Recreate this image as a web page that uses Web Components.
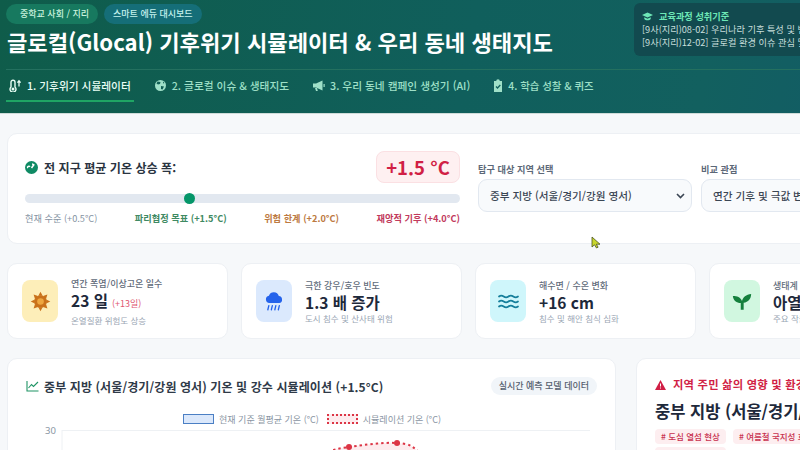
<!DOCTYPE html>
<html lang="ko">
<head>
<meta charset="utf-8">
<title>글로컬 기후위기 시뮬레이터</title>
<style>
  html, body { margin: 0; height: 450px; overflow: hidden; background: #f6f8fa; }
  body { font-family: "Noto Sans CJK KR", "Noto Sans", sans-serif; width: 937px; }
</style>
</head>
<body>
<app-header></app-header>
<climate-controls></climate-controls>
<section class="stats" style="display:grid;grid-template-columns:repeat(4,221px);gap:13px;padding:19px 7px 19px">
  <stat-card label="연간 폭염/이상고온 일수" value="23 일" delta="(+13일)" note="온열질환 위험도 상승" tone="sun"></stat-card>
  <stat-card label="극한 강우/호우 빈도" value="1.3 배 증가" note="도시 침수 및 산사태 위험" tone="rain"></stat-card>
  <stat-card label="해수면 / 수온 변화" value="+16 cm" note="침수 및 해안 침식 심화" tone="wave"></stat-card>
  <stat-card label="생태계 변화" value="아열대화" note="주요 작물 재배지 북상" tone="leaf"></stat-card>
</section>
<section style="display:grid;grid-template-columns:609px 294px;gap:20px;padding:0 7px">
  <chart-panel></chart-panel>
  <impact-panel></impact-panel>
</section>
<mouse-cursor></mouse-cursor>

<script>
const SUN_RAYS = [0, 45, 90, 135, 180, 225, 270, 315]
  .map(a => `<path d="M9.600 5.500L12 .8l2.400 4.700z" transform="rotate(${a} 12 12)"/>`).join('');
const ICONS = {
  sun: `<svg width="21" height="21" viewBox="0 0 24 24" fill="#c9711a">${SUN_RAYS}<circle cx="12" cy="12" r="7.200"/><circle cx="12" cy="12" r="3.800" fill="#eea63f"/></svg>`,
  rain: '<svg width="20" height="20" viewBox="0 0 24 24" fill="#2563eb"><path d="M6.500 14.500a4.500 4.500 0 0 1-.6-8.900A6.300 6.300 0 0 1 17.800 6a4.300 4.300 0 0 1 .4 8.500z"/><path d="M5.800 17.500l-1.200 5M10 17.500l-1.200 5M14.200 17.500l-1.200 5M18.400 17.500l-1.200 5" stroke="#2563eb" stroke-width="1.600" stroke-linecap="round"/></svg>',
  wave: '<svg width="21" height="15" viewBox="0 0 21 15" fill="none" stroke="#167f9b" stroke-width="1.700" stroke-linecap="round"><path d="M1 2.500c1.500-1.300 3-1.300 4.700 0s3 1.300 4.800 0 3-1.300 4.800 0 3 1.300 4.700 0"/><path d="M1 7.500c1.500-1.300 3-1.300 4.700 0s3 1.300 4.800 0 3-1.300 4.800 0 3 1.300 4.700 0"/><path d="M1 12.500c1.500-1.300 3-1.300 4.700 0s3 1.300 4.800 0 3-1.300 4.800 0 3 1.300 4.700 0"/></svg>',
  leaf: '<svg width="20" height="20" viewBox="0 0 24 24" fill="#15803d"><path d="M10.500 22.500v-8C5.500 14.500 1.500 11.500 1 6c5 0 9.500 1.500 11 6 1-4.500 5-8 11-8.500-.2 6-3.500 9.800-9 10.500v8.500z"/></svg>'
};
const TONES = { sun: '#fdeeb9', rain: '#dbe9fd', wave: '#cff6fb', leaf: '#d1f7e0' };

class AppHeader extends HTMLElement {
  constructor() {
    super();
    this.attachShadow({ mode: 'open' });
    this.shadowRoot.innerHTML = `
      <style>
        :host { display: block; height: 114px; box-sizing: border-box; padding: 4px 0 0 6px; color: #fff;
          background: linear-gradient(100deg, #0f5c4a 0%, #105f5c 50%, #12605f 75%, #125a68 100%);
          border-bottom: 1px solid #cfdcd9; overflow: hidden; }
        .top { display: flex; justify-content: space-between; height: 65px; }
        .badges { display: flex; gap: 6px; }
        .badge { height: 20px; line-height: 19px; border-radius: 10px; font-size: 9px; font-weight: 500; padding: 0 9px 0 14px; background: #17795f; color: #c9f3de; }
        .badge.blue { background: #156e78; color: #c5f2ee; padding: 0 9px 0 9px; }
        h1 { margin: 1px 0 0 1px; font-size: 22.150px; line-height: 33px; font-weight: 700; white-space: nowrap; }
        .std { width: 303px; height: 53px; margin: -1px 0 0; box-sizing: border-box; padding: 7px 8px; border-radius: 6px; background: #124a4f; font-size: 9.200px; line-height: 13px; color: #c9dfdc; white-space: nowrap; flex: none; }
        .std b { display: flex; align-items: center; gap: 6px; color: #6ee7b7; font-weight: 600; }
        nav { display: flex; gap: 17px; height: 33px; border-top: 1px solid #24705f; }
      </style>
      <div class="top">
        <div>
          <div class="badges"><span class="badge">중학교 사회 / 지리</span><span class="badge blue">스마트 에듀 대시보드</span></div>
          <h1>글로컬(Glocal) 기후위기 시뮬레이터 &amp; 우리 동네 생태지도</h1>
        </div>
        <div class="std">
          <b><svg width="11" height="9" viewBox="0 0 24 18" fill="#6ee7b7"><path d="M12 0L0 5.500l12 5.500 12-5.500zM5 10.500v4c2 3.500 12 3.500 14 0v-4l-7 3.200z"/></svg>교육과정 성취기준</b>
          [9사(지리)08-02] 우리나라 기후 특성 및 변화<br>[9사(지리)12-02] 글로컬 환경 이슈 관심 및 참여
        </div>
      </div>
      <nav>
        <nav-tab active icon="temp">1. 기후위기 시뮬레이터</nav-tab>
        <nav-tab icon="globe">2. 글로컬 이슈 &amp; 생태지도</nav-tab>
        <nav-tab icon="horn">3. 우리 동네 캠페인 생성기 (AI)</nav-tab>
        <nav-tab icon="check" style="font-size:10.400px">4. 학습 성찰 &amp; 퀴즈</nav-tab>
      </nav>`;
  }
}

const TAB_ICONS = {
  temp: '<svg width="13" height="13" viewBox="0 0 13 13"><path d="M4 1.200a2 2 0 0 1 2 2v4.700a3 3 0 1 1-4 0V3.200a2 2 0 0 1 2-2z" fill="none" stroke="currentColor" stroke-width="1.400"/><circle cx="4" cy="10" r="1.500" fill="currentColor"/><path d="M10 7.500V2M8.400 3.600L10 1.800l1.600 1.800" fill="none" stroke="currentColor" stroke-width="1.300"/></svg>',
  globe: '<svg width="13" height="13" viewBox="0 0 13 13"><circle cx="6.500" cy="6.500" r="5.500" fill="currentColor"/><path d="M3.500 2.500l3 .5-.5 2-2 .5-1.500-1zM7 7l3 .5-1.500 3-1.500-.5zM9 2.500l1.500 1.500-1.500.5z" fill="#105f55"/></svg>',
  horn: '<svg width="13" height="13" viewBox="0 0 13 13"><path d="M1 4.500h3L10.500 1.500v10L4 8.500H1zM3 9h2l.8 3H4zM11.500 5h1.200v3h-1.200z" fill="currentColor"/></svg>',
  check: '<svg width="10" height="13" viewBox="1.500 0 10 13"><path d="M2.500 2h2.200a1.800 1.800 0 0 1 3.600 0h2.200v11h-8z" fill="currentColor"/><path d="M4.500 7.500l1.500 1.500 2.800-3" fill="none" stroke="#105f5c" stroke-width="1.300"/></svg>'
};

class NavTab extends HTMLElement {
  connectedCallback() {
    const icon = TAB_ICONS[this.getAttribute('icon')];
    this.attachShadow({ mode: 'open' }).innerHTML = `
      <style>
        :host { display: flex; align-items: center; gap: 5px; height: 32px; box-sizing: border-box; padding: 0 3px; color: #9fe0c8; font-size: 10.700px; font-weight: 500; white-space: nowrap; border-bottom: 2px solid transparent; }
        :host([active]) { color: #eafff6; border-bottom-color: #1fa564; }
      </style>
      ${icon}<slot></slot>`;
  }
}

class ClimateControls extends HTMLElement {
  constructor() {
    super();
    this.attachShadow({ mode: 'open' });
    this.shadowRoot.innerHTML = `
      <style>
        :host { display: grid; grid-template-columns: 444px 214px 214px; column-gap: 9px; height: 111px; box-sizing: border-box; margin: 19px 7px 0; padding: 17px 17px 0; background: #fff; border: 1px solid #edf0f4; border-radius: 10px; }
        .left { width: 435px; }
        .head { display: flex; justify-content: space-between; align-items: center; height: 32px; }
        .head b { display: flex; align-items: center; gap: 6px; font-size: 12.100px; font-weight: 600; color: #2a3441; }
        .value { width: 84px; height: 32px; line-height: 30px; box-sizing: border-box; text-align: center; font-size: 18.500px; font-weight: 700; color: #d11f45; background: #fef0f1; border: 1px solid #fbe0e3; border-radius: 8px; }
        .track { position: relative; height: 9px; margin-top: 11px; border-radius: 5px; background: #e2e8f0; }
        .thumb { position: absolute; left: 159px; top: -1px; width: 11px; height: 11px; border-radius: 50%; background: #059669; }
        .ticks { display: flex; justify-content: space-between; margin-top: 9px; font-size: 9.200px; line-height: 13px; white-space: nowrap; }
        .field { padding-top: 11px; font-size: 9.200px; font-weight: 600; color: #5c6878; white-space: nowrap; }
      </style>
      <div class="left">
        <div class="head">
          <b><svg width="13" height="13" viewBox="0 0 12 12"><circle cx="6" cy="6" r="6" fill="#0f8a64"/><path d="M6 6.500L8.500 3M2.500 6.500a1 1 0 0 1 2-1M6.500 2.800a1 1 0 0 1 1 1" stroke="#fff" stroke-width="1.400" fill="none"/></svg>전 지구 평균 기온 상승 폭:</b>
          <span class="value">+1.5 °C</span>
        </div>
        <div class="track"><div class="thumb"></div></div>
        <div class="ticks">
          <span style="color:#8593a3;font-weight:400">현재 수준 (+0.5°C)</span>
          <span style="color:#3f8a63;font-weight:600">파리협정 목표 (+1.5°C)</span>
          <span style="color:#bd7a42;font-weight:600">위험 한계 (+2.0°C)</span>
          <span style="color:#c23a5c;font-weight:600">재앙적 기후 (+4.0°C)</span>
        </div>
      </div>
      <div class="field">탐구 대상 지역 선택<select-box>중부 지방 (서울/경기/강원 영서)</select-box></div>
      <div class="field">비교 관점<select-box>연간 기후 및 극값 변화</select-box></div>`;
  }
}

class SelectBox extends HTMLElement {
  connectedCallback() {
    this.attachShadow({ mode: 'open' }).innerHTML = `
      <style>
        :host { display: flex; align-items: center; justify-content: space-between; height: 33px; margin-top: 3px; box-sizing: border-box; padding: 0 6px 0 11px; background: #f8fafc; border: 1px solid #e2e8f0; border-radius: 9px; font-size: 10.600px; font-weight: 500; color: #3b4654; white-space: nowrap; }
      </style>
      <slot></slot>
      <svg width="9" height="6" viewBox="0 0 9 6" fill="none" stroke="#3b4654" stroke-width="1.600"><path d="M1 1l3.500 3.500L8 1"/></svg>`;
  }
}

class StatCard extends HTMLElement {
  connectedCallback() {
    const tone = this.getAttribute('tone');
    const delta = this.getAttribute('delta');
    this.attachShadow({ mode: 'open' }).innerHTML = `
      <style>
        :host { display: flex; align-items: center; gap: 13px; height: 76px; box-sizing: border-box; padding: 0 14px; background: #fff; border: 1px solid #edf0f4; border-radius: 10px; white-space: nowrap; overflow: hidden; }
        .ico { flex: none; width: 36px; height: 42px; display: flex; align-items: center; justify-content: center; border-radius: 8px; background: ${TONES[tone]}; }
        .label { font-size: 9px; line-height: 13px; font-weight: 500; color: #5f6b7a; }
        .value { font-size: 15.500px; line-height: 20px; font-weight: 700; color: #1e293b; }
        .value small { font-size: 9px; font-weight: 400; color: #e0566f; margin-left: 4px; }
        .note { font-size: 8.500px; line-height: 12px; color: #9aa6b4; }
      </style>
      <div class="ico">${ICONS[tone]}</div>
      <div>
        <div class="label">${this.getAttribute('label')}</div>
        <div class="value">${this.getAttribute('value')}${delta ? `<small>${delta}</small>` : ''}</div>
        <div class="note">${this.getAttribute('note')}</div>
      </div>`;
  }
}

class ChartPanel extends HTMLElement {
  constructor() {
    super();
    this.attachShadow({ mode: 'open' });
    this.shadowRoot.innerHTML = `
      <style>
        :host { display: block; height: 160px; box-sizing: border-box; padding: 17px 18px 0; background: #fff; border: 1px solid #edf0f4; border-radius: 10px 10px 0 0; }
        .head { display: flex; justify-content: space-between; align-items: center; height: 20px; }
        .head b { display: flex; align-items: center; gap: 5px; font-size: 12px; font-weight: 600; color: #2f3a48; letter-spacing: .1px; white-space: nowrap; }
        .tag { height: 18px; line-height: 17px; padding: 0 8px; border-radius: 9px; background: #f1f5f9; font-size: 9px; font-weight: 500; color: #55606e; }
        .legend { display: flex; justify-content: center; align-items: center; gap: 7px; margin-top: 16px; height: 14px; font-size: 9px; color: #8a95a3; padding-left: 1px; white-space: nowrap; }
        .swatch { width: 31px; height: 10px; box-sizing: border-box; margin-right: -2px; }
        svg.plot { display: block; margin: 0 0 0 -4px; }
      </style>
      <div class="head">
        <b><svg width="13" height="12" viewBox="0 0 13 12" fill="none" stroke="#1f9465" stroke-width="1.100"><path d="M1 1v10h11.500M2.500 8l3-3.500 2 2L12 2"/></svg>중부 지방 (서울/경기/강원 영서) 기온 및 강수 시뮬레이션 (+1.5°C)</b>
        <span class="tag">실시간 예측 모델 데이터</span>
      </div>
      <div class="legend">
        <span class="swatch" style="background:#dbe8fb;border:1.500px solid #4b7fc4"></span><span>현재 기준 월평균 기온 (°C)</span>
        <span class="swatch" style="background:#fdecee;border:2px dotted #dc3545;margin-left:1px"></span><span>시뮬레이션 기온 (°C)</span>
      </div>
      <svg class="plot" width="580" height="30" viewBox="0 0 580 30">
        <line x1="40" y1="4.500" x2="568" y2="4.500" stroke="#eef1f4"/>
        <line x1="40" y1="4" x2="40" y2="30" stroke="#eef1f4"/>
        <text x="23" y="8" font-size="9.500" fill="#8a95a3" font-family="Noto Sans, sans-serif">30</text>
        <path d="M306 30V26C313 23 320 22 327 21S360 16 375 17S390 21 396 25V30z" fill="#fdecee"/>
        <path d="M306 26C313 23 320 22 327 21S360 16 375 17S390 21 396 25" fill="none" stroke="#dc3545" stroke-width="2" stroke-dasharray="2.400 3"/>
        <circle cx="327" cy="21" r="3" fill="#dc3545"/>
        <circle cx="375" cy="17" r="3" fill="#dc3545"/>
      </svg>`;
  }
}

class ImpactPanel extends HTMLElement {
  constructor() {
    super();
    this.attachShadow({ mode: 'open' });
    this.shadowRoot.innerHTML = `
      <style>
        :host { display: block; height: 160px; box-sizing: border-box; padding: 18px 18px 0; background: #fff; border: 1px solid #edf0f4; border-radius: 10px 10px 0 0; white-space: nowrap; overflow: hidden; }
        .alert { display: flex; align-items: center; gap: 7px; font-size: 11.300px; line-height: 15px; font-weight: 600; color: #d11f45; letter-spacing: .2px; }
        h2 { margin: 8px 0 0; font-size: 16.500px; line-height: 22px; font-weight: 700; color: #1e293b; }
        .tags { display: flex; flex-wrap: wrap; gap: 3px 7px; margin-top: 7px; }
        .tags span { height: 15px; line-height: 14px; padding: 0 6px; border-radius: 4px; background: #fdeef0; color: #c8324f; font-size: 8.500px; font-weight: 500; }
      </style>
      <div class="alert"><svg width="11" height="10" viewBox="0 0 11 10"><path d="M5.500 0L11 10H0z" fill="#d11f45"/><path d="M5.500 3.500v3M5.500 7.500v1" stroke="#fff" stroke-width="1"/></svg>지역 주민 삶의 영향 및 환경 리스크</div>
      <h2>중부 지방 (서울/경기/강원 영서)</h2>
      <div class="tags"><span># 도심 열섬 현상</span><span># 여름철 국지성 호우 및 침수</span><span># 도시 침수 위험</span></div>`;
  }
}

// 스크린샷에 같이 찍힌 마우스 포인터
class MouseCursor extends HTMLElement {
  connectedCallback() {
    this.attachShadow({ mode: 'open' }).innerHTML = `
      <style>:host { position: absolute; left: 591px; top: 230px; width: 10px; height: 13px; }</style>
      <svg width="10" height="13" viewBox="0 0 10 13"><path d="M1 1v10l2.500-2.200L5.500 12l1.600-.8-1.800-3H9z" fill="#c8d62b" stroke="#4a5320" stroke-width=".8"/></svg>`;
  }
}

customElements.define('nav-tab', NavTab);
customElements.define('app-header', AppHeader);
customElements.define('select-box', SelectBox);
customElements.define('climate-controls', ClimateControls);
customElements.define('stat-card', StatCard);
customElements.define('chart-panel', ChartPanel);
customElements.define('impact-panel', ImpactPanel);
customElements.define('mouse-cursor', MouseCursor);
</script>
</body>
</html>
